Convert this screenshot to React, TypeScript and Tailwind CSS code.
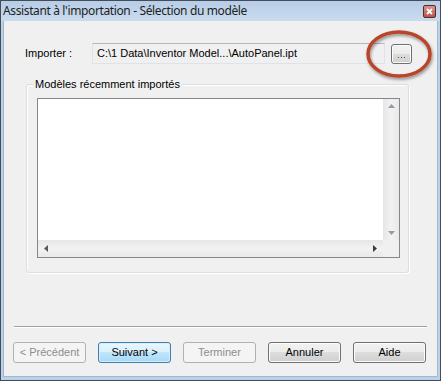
import React from "react";

const dlgFont = { fontFamily: '"Liberation Sans", Arial, sans-serif' };

function Btn({ label, kind }: { label: string; kind: "normal" | "disabled" | "focus" }) {
  const cls =
    kind === "disabled"
      ? "border-[#adb2b5] bg-[#f4f4f4] text-[#8d8d8d]"
      : kind === "focus"
      ? "border-[#3c7fb1] bg-[linear-gradient(#eaf6fd_0%,#d9f0fc_50%,#bee6fd_50%,#a7d9f5_100%)] text-black shadow-[inset_0_0_0_1px_#d8eefb]"
      : "border-[#707070] bg-[linear-gradient(#f2f2f2_0%,#ebebeb_50%,#dddddd_50%,#cfcfcf_100%)] text-black shadow-[inset_0_0_0_1px_#fcfcfc]";
  return (
    <div
      className={`w-[73px] h-[21px] rounded-[3px] border flex items-center justify-center text-[11px] leading-none ${cls}`}
    >
      {label}
    </div>
  );
}

function TriUp() {
  return (
    <svg width="7" height="4" viewBox="0 0 7 4">
      <path d="M0 4 L3.5 0 L7 4 Z" fill="#9a9a9a" />
    </svg>
  );
}
function TriDown() {
  return (
    <svg width="7" height="4" viewBox="0 0 7 4">
      <path d="M0 0 L3.5 4 L7 0 Z" fill="#9a9a9a" />
    </svg>
  );
}
function TriLeft() {
  return (
    <svg width="4" height="7" viewBox="0 0 4 7">
      <path d="M4 0 L0 3.5 L4 7 Z" fill="#5a5a5a" />
    </svg>
  );
}
function TriRight() {
  return (
    <svg width="4" height="7" viewBox="0 0 4 7">
      <path d="M0 0 L4 3.5 L0 7 Z" fill="#3a3a3a" />
    </svg>
  );
}

export default function App() {
  return (
    <div className="relative w-[441px] h-[381px] overflow-hidden bg-[#b9d1ea] border border-[#434c58] flex flex-col" style={dlgFont}>
      {/* Title bar */}
      <div className="h-[20px] shrink-0 flex items-center justify-between pl-[2px] pr-[4px] bg-[linear-gradient(#b7cde6,#c9dbef)]">
        <span
          className="text-[12px] text-[#1e1e1e] leading-none tracking-[-0.37px]"
          style={{ fontFamily: '"Noto Sans", "Open Sans", sans-serif' }}
        >
          Assistant à l'importation - Sélection du modèle
        </span>
        <div className="w-[13px] h-[13px] mt-[1px] border border-[#5a2a25] rounded-[2px] bg-[linear-gradient(#d9958d,#b8564b)] flex items-center justify-center">
          <svg width="7" height="7" viewBox="0 0 7 7">
            <path d="M1 1 L6 6 M6 1 L1 6" stroke="#ffffff" strokeWidth="1.8" />
          </svg>
        </div>
      </div>

      {/* Client area */}
      <div className="flex-1 mx-[2px] mb-[3px] bg-[#f0f0f0] border border-[#a6b7cb] border-t-0 flex flex-col">
        {/* Importer row */}
        <div className="flex items-center mt-[22px] h-[21px]">
          <span className="ml-[21px] w-[67px] text-[11px] text-black leading-none">Importer :</span>
          <div className="w-[293px] h-[21px] border border-[#dde3ea] border-t-[#b4b8bd] bg-[#f0f0f0] flex items-center pl-[4px] text-[11px] leading-none text-black">
            C:\1 Data\Inventor Model...\AutoPanel.ipt
          </div>
          <div className="ml-[6px] w-[21px] h-[20px] rounded-[3px] border border-[#707070] bg-[linear-gradient(#f2f2f2_0%,#ebebeb_50%,#dddddd_50%,#cfcfcf_100%)] shadow-[inset_0_0_0_1px_#fcfcfc] flex items-end justify-center pb-[5px]">
            <span className="flex gap-[2px]">
              <span className="w-[1px] h-[1px] bg-[#6a5a00]" />
              <span className="w-[1px] h-[1px] bg-[#9a00a0]" />
              <span className="w-[1px] h-[1px] bg-[#0050b0]" />
            </span>
          </div>
        </div>

        {/* Group box */}
        <div className="relative ml-[22px] mt-[20px] w-[383px] h-[189px] rounded-[3px] border border-[#d5dfe5] shadow-[inset_1px_1px_0_#ffffff,1px_1px_0_#ffffff]">
          <span className="absolute left-[6px] top-[-8px] px-[2px] bg-[#f0f0f0] text-[11px] leading-[14px] text-black">
            Modèles récemment importés
          </span>
          {/* Listbox */}
          <div className="ml-[10px] mt-[13px] w-[363px] h-[160px] border border-[#828790] bg-white flex flex-col">
            <div className="flex flex-1">
              <div className="flex-1" />
              <div className="w-[16px] bg-[linear-gradient(90deg,#e6e6e6,#f2f2f2,#e9e9e9)] flex flex-col items-center justify-between py-[5px]">
                <TriUp />
                <TriDown />
              </div>
            </div>
            <div className="h-[17px] flex">
              <div className="flex-1 bg-[linear-gradient(#e6e6e6,#f2f2f2,#e9e9e9)] flex items-center justify-between px-[6px]">
                <TriLeft />
                <TriRight />
              </div>
              <div className="w-[16px] bg-[#f0f0f0]" />
            </div>
          </div>
        </div>

        {/* Separator */}
        <div className="mx-[10px] mt-[53px] h-[1px] bg-[#a0a0a0] border-b border-white box-content" />

        {/* Buttons */}
        <div className="flex mt-[14px] ml-[9px] gap-[12px]">
          <Btn label="< Précédent" kind="disabled" />
          <Btn label="Suivant >" kind="focus" />
          <Btn label="Terminer" kind="disabled" />
          <Btn label="Annuler" kind="normal" />
          <Btn label="Aide" kind="normal" />
        </div>
      </div>

      {/* Red annotation ellipse */}
      <svg className="absolute left-[360px] top-[24px]" width="78" height="60" viewBox="0 0 78 60">
        <defs>
          <filter id="sh" x="-20%" y="-20%" width="140%" height="140%">
            <feDropShadow dx="1" dy="2" stdDeviation="1.8" floodColor="#000" floodOpacity="0.4" />
          </filter>
        </defs>
        <ellipse cx="38" cy="29" rx="31" ry="22" fill="none" stroke="#b9442c" strokeWidth="3.5" filter="url(#sh)" />
      </svg>
    </div>
  );
}
